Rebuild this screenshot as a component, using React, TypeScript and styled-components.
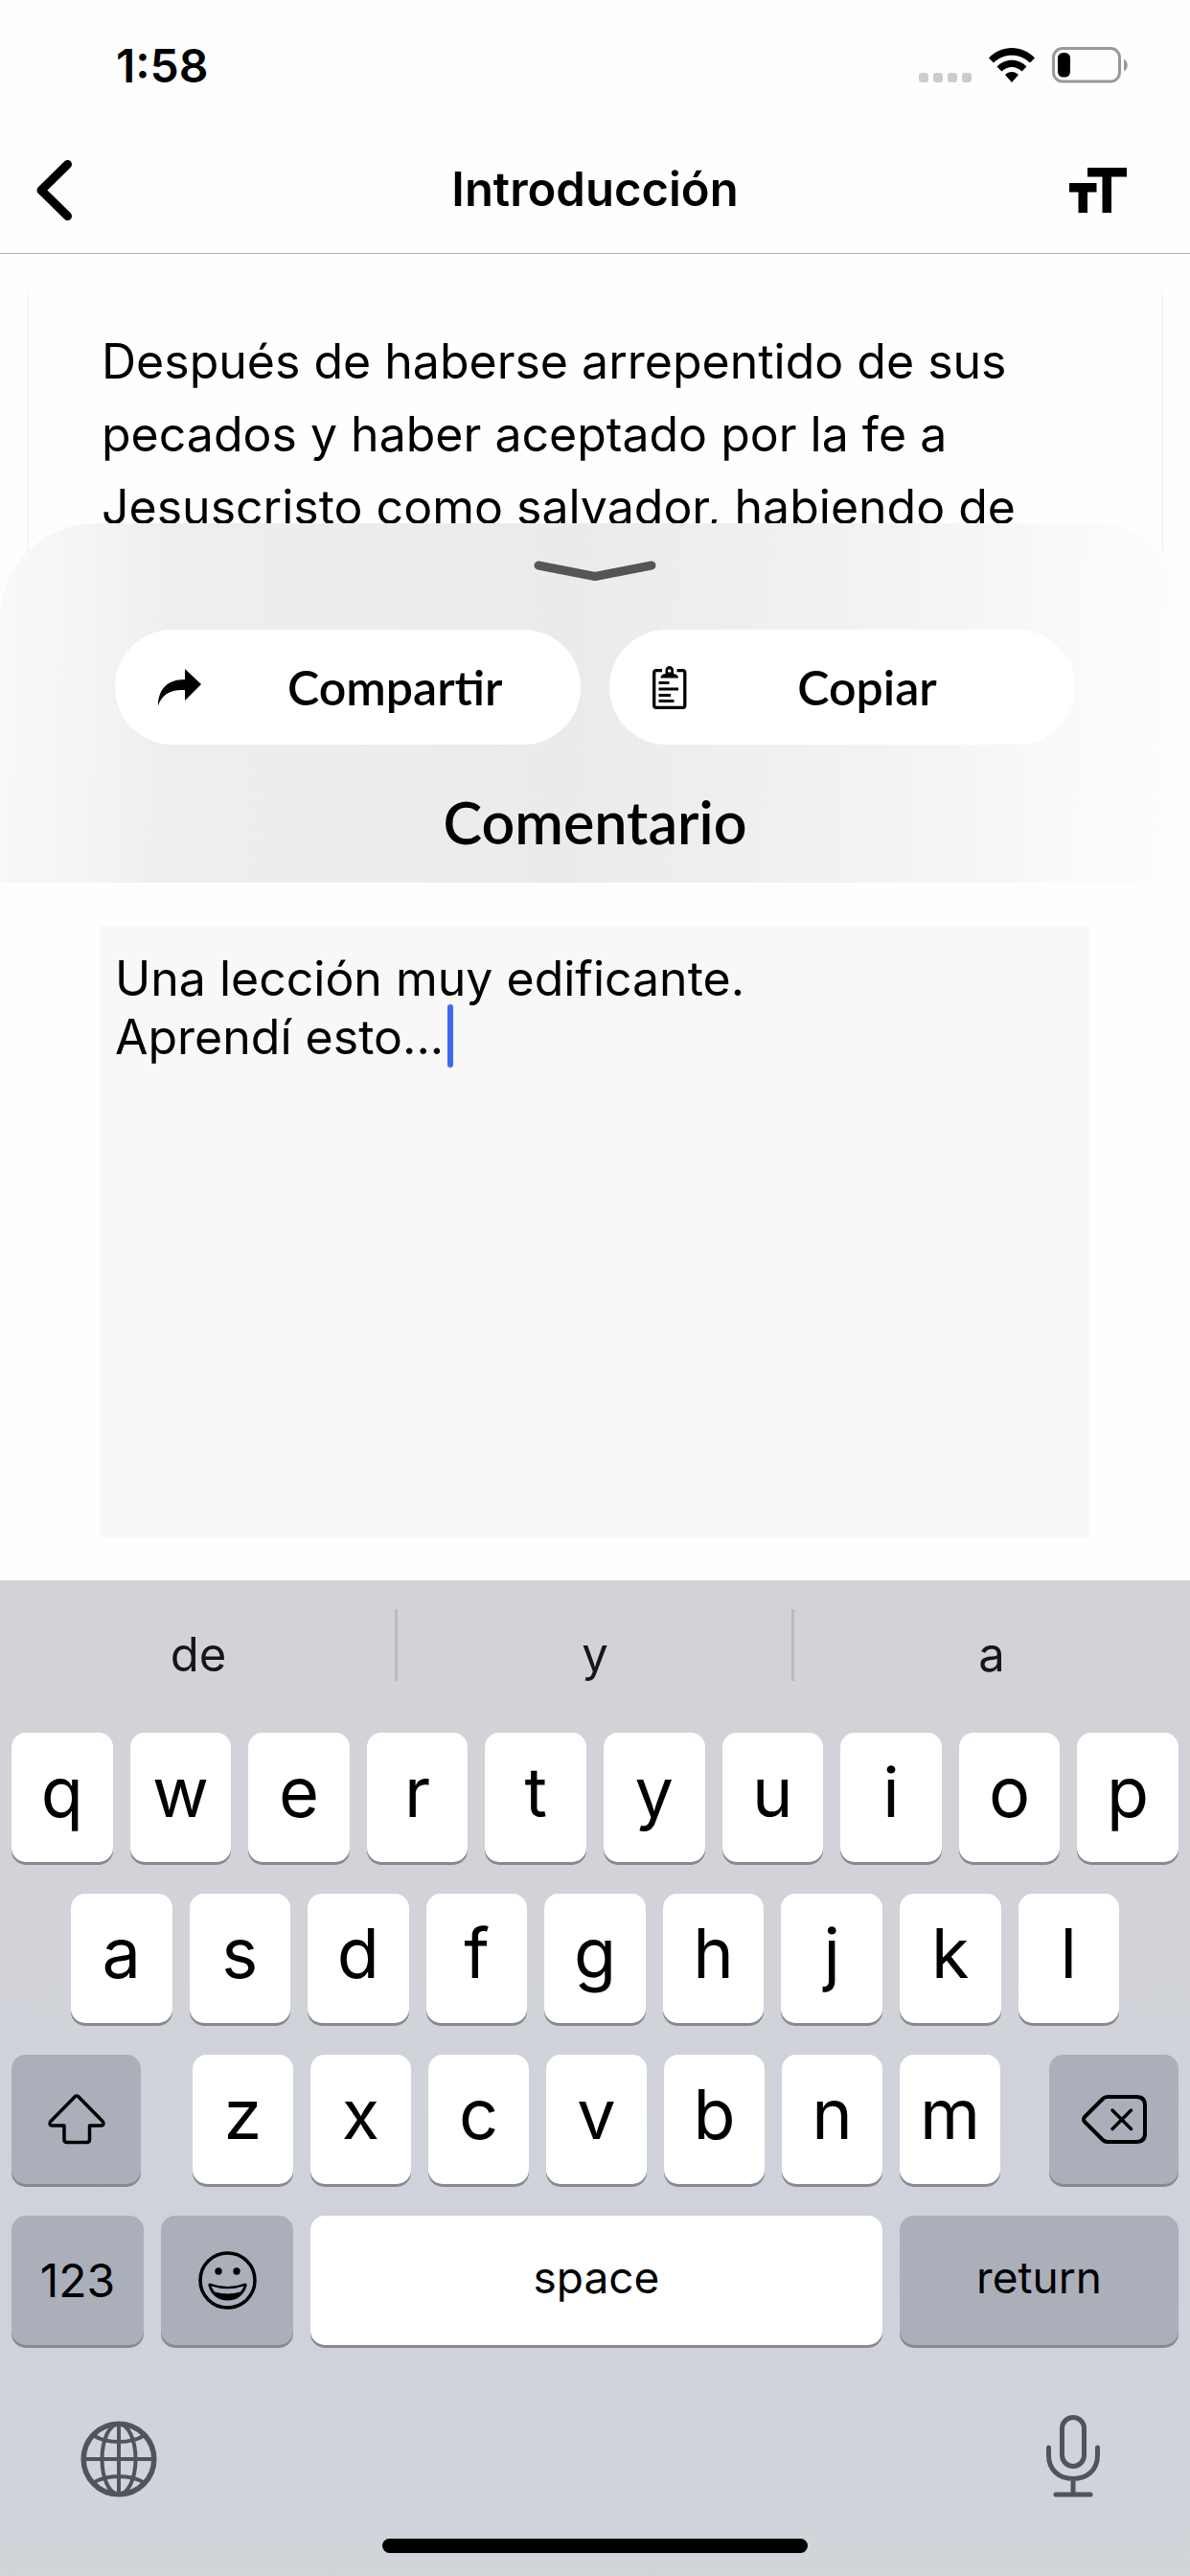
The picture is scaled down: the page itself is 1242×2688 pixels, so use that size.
import React, { useState } from "react";
import styled, { createGlobalStyle } from "styled-components";

const GlobalStyle = createGlobalStyle`
  *, *::before, *::after { box-sizing: border-box; }
  body {
    margin: 0;
    background: #fefefe;
    color: #000;
    font-family: Inter, "Liberation Sans", sans-serif;
  }
  button {
    margin: 0;
    padding: 0;
    border: 0;
    background: none;
    color: inherit;
    font: inherit;
    cursor: pointer;
  }
  svg { display: block; }
`;

const Screen = styled.div`
  display: flex;
  flex-direction: column;
  min-height: 100vh;
`;

const StatusBar = styled.header`
  display: flex;
  align-items: center;
  justify-content: space-between;
  height: 136px;
  padding: 0 64px 0 121px;
`;

const Clock = styled.time`
  font-size: 48px;
  font-weight: 600;
`;

const StatusIcons = styled.div`
  display: flex;
  align-items: center;
  gap: 18px;
`;

const NavBar = styled.nav`
  display: grid;
  grid-template-columns: 1fr auto 1fr;
  align-items: center;
  height: 129px;
  padding: 0 38px 4px;
  border-bottom: 1px solid #b3b3b3;
`;

const NavButton = styled.button<{ $end?: boolean }>`
  justify-self: ${(p) => (p.$end ? "end" : "start")};
  padding-right: ${(p) => (p.$end ? 28 : 0)}px;
`;

const NavTitle = styled.h1`
  margin: 0;
  font-size: 49px;
  line-height: 64px;
  font-weight: 600;
`;

const Article = styled.main`
  height: 381px;
  padding: 29px 30px 0;
  overflow: hidden;
`;

const Card = styled.article`
  height: 400px;
  padding: 45px 76px 0;
  border-radius: 12px;
  background: #fefefe;
  box-shadow: 0 4px 4px rgba(0, 0, 0, 0.12);
`;

const Verse = styled.p`
  margin: 0;
  font-size: 50px;
  line-height: 76px;
`;

const Sheet = styled.section`
  position: relative;
  display: flex;
  flex: 1;
  flex-direction: column;
  margin-top: -100px;
`;

const SheetHead = styled.div`
  display: flex;
  flex-direction: column;
  align-items: center;
  padding: 39px 120px 27px;
  border-radius: 100px 100px 0 0;
  background: linear-gradient(
    92deg,
    #f9f9f9 0%,
    #f5f5f5 7%,
    #eeeeee 15%,
    #ebebeb 48%,
    #f0f0f0 66%,
    #f5f5f5 80%,
    #fbfbfb 92%,
    #fdfdfd 100%
  );
`;

const Actions = styled.div`
  display: grid;
  grid-template-columns: 1fr 1fr;
  gap: 30px;
  width: 100%;
  margin-top: 50px;
`;

const ActionButton = styled.button`
  display: flex;
  align-items: center;
  height: 120px;
  padding-left: 45px;
  border-radius: 60px;
  background: #fff;
`;

const ActionIcon = styled.span`
  width: 45px;
`;

const ActionLabel = styled.span`
  min-width: 178px;
  margin-left: 90px;
  font-family: Lato, "Liberation Sans", sans-serif;
  font-size: 50px;
  line-height: 60px;
  font-weight: 600;
`;

const SheetTitle = styled.label`
  margin-top: 45px;
  font-family: Lato, "Liberation Sans", sans-serif;
  font-size: 61px;
  line-height: 72px;
  font-weight: 600;
`;

const SheetBody = styled.div`
  display: flex;
  flex: 1;
  padding: 45px 105px;
  background: #fefefe;
`;

const Editor = styled.div`
  position: relative;
  display: flex;
  flex: 1;
`;

const CommentBox = styled.textarea`
  flex: 1;
  min-height: 300px;
  padding: 25px 15px;
  border: 0;
  border-radius: 0;
  outline: none;
  resize: none;
  background: #f8f8f8;
  color: #000;
  font-family: Inter, "Liberation Sans", sans-serif;
  font-size: 50px;
  line-height: 61px;
`;

const Caret = styled.span`
  position: absolute;
  top: 82px;
  left: 362px;
  width: 6px;
  height: 66px;
  border-radius: 3px;
  background: #4169ef;
`;

const Keyboard = styled.section`
  padding: 30px 12px 24px;
  background: linear-gradient(180deg, #d1d3d8 0%, #d1d3d9 40%, #cfd2db 70%, #d1d4d9 100%);
`;

const Suggestions = styled.div`
  display: grid;
  grid-template-columns: repeat(3, 1fr);
  height: 129px;
  margin: 0 -12px;
`;

const Suggestion = styled.button`
  position: relative;
  height: 94px;
  color: #151617;
  font-size: 49px;

  & + &::before {
    content: "";
    position: absolute;
    top: 0;
    left: -2px;
    width: 3px;
    height: 75px;
    background: #bbbcc1;
  }
`;

const Keys = styled.div`
  display: flex;
  flex-direction: column;
  gap: 33px;
`;

const KeyRow = styled.div<{ $inset?: number }>`
  display: flex;
  gap: 18px;
  padding: 0 ${(p) => p.$inset ?? 0}px;
`;

const MiddleKeys = styled.div`
  display: flex;
  flex: 1;
  gap: 18px;
  margin: 0 33px 0 36px;
`;

const Key = styled.button<{ $dark?: boolean; $width?: number; $kind?: "word" | "glyph" }>`
  display: flex;
  flex: ${(p) => (p.$width ? `0 0 ${p.$width}px` : "1 1 0")};
  align-items: center;
  justify-content: center;
  min-width: 0;
  height: 135px;
  padding-bottom: ${(p) => (p.$kind === "glyph" ? 0 : p.$kind === "word" ? 8 : 13)}px;
  border-radius: 15px;
  background: ${(p) => (p.$dark ? "#abafba" : "#fff")};
  box-shadow: 0 3px 0 #88898e;
  font-size: ${(p) => (p.$kind === "glyph" ? 48 : p.$kind === "word" ? 46 : 72)}px;
`;

const BottomBar = styled.div`
  display: flex;
  align-items: flex-end;
  justify-content: space-between;
  margin-top: 73px;
  padding: 0 82px 0 72px;
`;

const HomeIndicator = styled.div`
  width: 444px;
  height: 15px;
  margin: 43px auto 0;
  border-radius: 8px;
  background: #000;
`;

const SignalDots = () => (
  <svg width="55" height="36" viewBox="0 0 55 36" fill="#ccc" aria-hidden="true">
    {[0, 15, 30, 45].map((x) => (
      <rect key={x} x={x} y="26" width="10" height="10" rx="3" />
    ))}
  </svg>
);

const WifiIcon = () => (
  <svg width="48" height="36" viewBox="0 0 48 36" aria-hidden="true">
    <path d="M0 10.500C13-3.500 35-3.500 48 10.500L43 15.500C32.500 5 15.500 5 5 15.500Z" />
    <path d="M8.500 19.500C17 10.500 31 10.500 39.500 19.500L34.500 24.500C28.500 18.500 19.500 18.500 13.500 24.500Z" />
    <path d="M17 28C21 24 27 24 31 28L24 36Z" />
  </svg>
);

const BatteryIcon = () => (
  <svg width="80" height="38" viewBox="0 0 80 38" aria-hidden="true">
    <rect x="1.500" y="1.500" width="69" height="34.500" rx="9.500" fill="none" stroke="#999" strokeWidth="3" />
    <rect x="6" y="6" width="13" height="25.500" rx="5.500" />
    <path d="M75 12.500C80 15 80 23 75 25.500Z" fill="#999" />
  </svg>
);

const BackIcon = () => (
  <svg width="37" height="63" viewBox="0 0 37 63" fill="none" stroke="#000" strokeWidth="9" strokeLinecap="round" strokeLinejoin="round" aria-hidden="true">
    <path d="M32.500 4.500L5 31.500L32.500 58.500" />
  </svg>
);

const TextSizeIcon = () => (
  <svg width="60" height="47" viewBox="0 0 60 47" aria-hidden="true">
    <rect x="19" width="41" height="9.500" />
    <rect x="34.500" width="9.500" height="47" />
    <rect y="16" width="28.500" height="9.500" />
    <rect x="9.500" y="16" width="9.500" height="31" />
  </svg>
);

const HandleIcon = () => (
  <svg width="128" height="22" viewBox="0 0 128 22" fill="none" stroke="#555" strokeWidth="9" strokeLinecap="round" strokeLinejoin="round" aria-hidden="true">
    <path d="M5 5L64 16.500L123 5" />
  </svg>
);

const ShareIcon = () => (
  <svg width="45" height="39" viewBox="0 0 45 39" aria-hidden="true">
    <path d="M28 0L45 16L28 33V22C14 21 4 26 0 38.500C0 22 9 11 28 11Z" />
  </svg>
);

const ClipboardIcon = () => (
  <svg width="36" height="45" viewBox="0 0 36 45" aria-hidden="true">
    <path d="M10 4.700H4Q1.700 4.700 1.700 7V41Q1.700 43.300 4 43.300H31.500Q33.800 43.300 33.800 41V7Q33.800 4.700 31.500 4.700H25.500" fill="none" stroke="#000" strokeWidth="3.300" />
    <path fillRule="evenodd" d="M8.500 12.500C8.500 9.500 11 8.500 13.500 8V4.500C13.500-1.500 22 -1.500 22 4.500V8C24.500 8.500 27 9.500 27 12.500ZM17.700 3.200A1.800 1.800 0 1 0 17.700 6.800A1.800 1.800 0 1 0 17.700 3.200Z" />
    <path d="M6.500 17.500H17.500M6.500 24H27M6.500 30.500H19M6.500 36.500H22.500" stroke="#000" strokeWidth="3" />
  </svg>
);

const ShiftIcon = () => (
  <svg width="60" height="53" viewBox="0 0 60 53" fill="none" stroke="#000" strokeWidth="3.500" strokeLinejoin="round" aria-hidden="true">
    <path d="M28.500 2.500Q30 1.500 31.500 2.500L57.500 29Q59 33 55.500 33H43.500V47.500Q43.500 50.500 40.500 50.500H20Q17 50.500 17 47.500V33H4.500Q1 33 2.500 29Z" />
  </svg>
);

const DeleteIcon = () => (
  <svg width="68" height="51" viewBox="0 0 68 51" fill="none" stroke="#000" strokeWidth="4" strokeLinecap="round" strokeLinejoin="round" aria-hidden="true">
    <path d="M27 2H57Q66 2 66 11V40Q66 49 57 49H27Q24 49 22 47L3 28Q1 25.500 3 23L22 4Q24 2 27 2Z" />
    <path d="M32 16L51.500 35.500M51.500 16L32 35.500" strokeWidth="3.500" />
  </svg>
);

const SmileIcon = () => (
  <svg width="61" height="61" viewBox="0 0 61 61" aria-hidden="true">
    <circle cx="30.500" cy="30.500" r="28.500" fill="none" stroke="#000" strokeWidth="3.500" />
    <circle cx="21" cy="21" r="3.700" />
    <circle cx="40" cy="21" r="3.700" />
    <path fillRule="evenodd" d="M12 33.500Q30.500 40.500 49 33.500Q51 33.500 50.500 36C48 46 40 51.500 30.500 51.500C21 51.500 13 46 10.500 36Q10 33.500 12 33.500ZM13.500 36.500C14.500 39 15.500 40.500 17 42.500Q30.500 46.500 44 42.500C45.500 40.500 46.500 39 47.500 36.500Q30.500 42 13.500 36.500Z" />
  </svg>
);

const GlobeIcon = () => (
  <svg width="80" height="80" viewBox="0 0 80 80" fill="none" stroke="#50555b" strokeWidth="4" aria-hidden="true">
    <circle cx="40" cy="40" r="36.800" strokeWidth="5.500" />
    <ellipse cx="40" cy="40" rx="17.500" ry="36.800" />
    <path d="M40 3V77M3 40H77M13 15Q24 22 40 22T67 15M13 65Q24 58 40 58T67 65" />
  </svg>
);

const MicIcon = () => (
  <svg width="56" height="86" viewBox="0 0 56 86" fill="none" stroke="#50555b" strokeWidth="5" strokeLinecap="round" aria-hidden="true">
    <rect x="16.500" y="2.500" width="23" height="51" rx="11.500" />
    <path d="M2.500 34V42C2.500 57 13 66.500 28 66.500C43 66.500 53.500 57 53.500 42V34M28 67V82M10 83H46" />
  </svg>
);

const letters = (row: string) => row.split("").map((c) => <Key key={c}>{c}</Key>);

export default function App() {
  const [comment, setComment] = useState("Una lección muy edificante.\nAprendí esto...");

  return (
    <Screen>
      <GlobalStyle />
      <StatusBar>
        <Clock>1:58</Clock>
        <StatusIcons>
          <SignalDots />
          <WifiIcon />
          <BatteryIcon />
        </StatusIcons>
      </StatusBar>
      <NavBar>
        <NavButton aria-label="Atrás">
          <BackIcon />
        </NavButton>
        <NavTitle>Introducción</NavTitle>
        <NavButton $end aria-label="Tamaño del texto">
          <TextSizeIcon />
        </NavButton>
      </NavBar>

      <Article>
        <Card>
          <Verse>
            Después de haberse arrepentido de sus pecados y haber aceptado por la fe a
            Jesuscristo como salvador, habiendo de
          </Verse>
        </Card>
      </Article>

      <Sheet>
        <SheetHead>
          <button aria-label="Cerrar">
            <HandleIcon />
          </button>
          <Actions>
            <ActionButton>
              <ActionIcon>
                <ShareIcon />
              </ActionIcon>
              <ActionLabel>Compartir</ActionLabel>
            </ActionButton>
            <ActionButton>
              <ActionIcon>
                <ClipboardIcon />
              </ActionIcon>
              <ActionLabel>Copiar</ActionLabel>
            </ActionButton>
          </Actions>
          <SheetTitle htmlFor="comment">Comentario</SheetTitle>
        </SheetHead>
        <SheetBody>
          <Editor>
            <CommentBox
              id="comment"
              spellCheck={false}
              value={comment}
              onChange={(e) => setComment(e.target.value)}
            />
            <Caret />
          </Editor>
        </SheetBody>
      </Sheet>

      <Keyboard aria-label="Teclado">
        <Suggestions>
          <Suggestion>de</Suggestion>
          <Suggestion>y</Suggestion>
          <Suggestion>a</Suggestion>
        </Suggestions>
        <Keys>
          <KeyRow>{letters("qwertyuiop")}</KeyRow>
          <KeyRow $inset={62}>{letters("asdfghjkl")}</KeyRow>
          <KeyRow>
            <Key $dark $width={135} $kind="glyph" aria-label="shift">
              <ShiftIcon />
            </Key>
            <MiddleKeys>{letters("zxcvbnm")}</MiddleKeys>
            <Key $dark $width={135} $kind="glyph" aria-label="delete">
              <DeleteIcon />
            </Key>
          </KeyRow>
          <KeyRow>
            <Key $dark $width={138} $kind="glyph">
              123
            </Key>
            <Key $dark $width={138} $kind="glyph" aria-label="emoji">
              <SmileIcon />
            </Key>
            <Key $kind="word">space</Key>
            <Key $dark $width={291} $kind="word">
              return
            </Key>
          </KeyRow>
        </Keys>
        <BottomBar>
          <button aria-label="globe">
            <GlobeIcon />
          </button>
          <button aria-label="dictation">
            <MicIcon />
          </button>
        </BottomBar>
        <HomeIndicator />
      </Keyboard>
    </Screen>
  );
}
